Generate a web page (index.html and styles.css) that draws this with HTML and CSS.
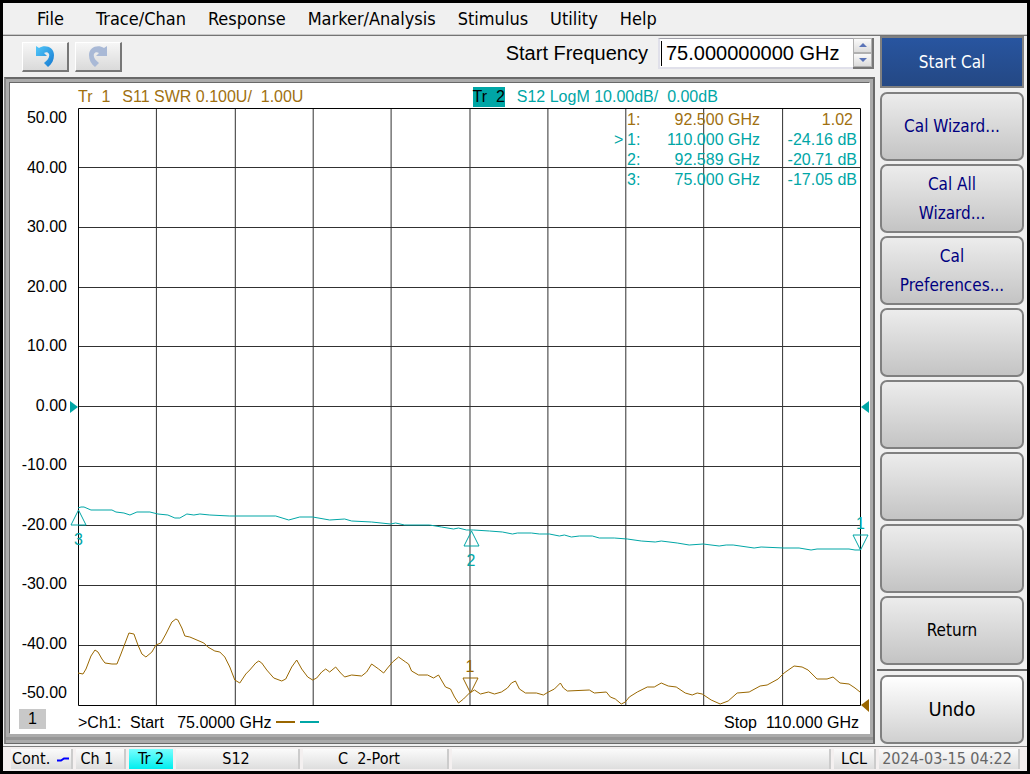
FILE: index.html
```html
<!DOCTYPE html>
<html lang="en">
<head>
<meta charset="utf-8">
<title>Network Analyzer</title>
<link rel="stylesheet" href="styles.css">
</head>
<body>
<div class="app">
  <nav class="menu">
    <button class="menu-item menu-first">File</button>
    <button class="menu-item">Trace/Chan</button>
    <button class="menu-item">Response</button>
    <button class="menu-item">Marker/Analysis</button>
    <button class="menu-item">Stimulus</button>
    <button class="menu-item">Utility</button>
    <button class="menu-item">Help</button>
  </nav>
  <div class="body">
    <main class="work">
      <div class="toolbar">
        <button class="tool" aria-label="Undo">
          <svg width="20" height="22" viewBox="0 0 20 22"><defs><linearGradient id="blue" x2="1" y2="1"><stop offset="0" stop-color="#52c8fa"/><stop offset="1" stop-color="#1478d0"/></linearGradient></defs><path fill="url(#blue)" d="M1 1 4 3C10-1 19 2 19 10c0 5-2 9-6 12l-4-4c4-3 6-6 5-9-1-2-3-2-5-1l3 3H1z"/></svg>
        </button>
        <button class="tool" aria-label="Redo">
          <svg width="20" height="22" viewBox="0 0 20 22"><path fill="#a9b9d6" d="M19 1 16 3C10-1 1 2 1 10c0 5 2 9 6 12l4-4c-4-3-6-6-5-9 1-2 3-2 5-1l-3 3h11z"/></svg>
        </button>
        <label class="freq-label" for="freq">Start Frequency</label>
        <div class="freq-box">
          <input class="freq" id="freq" type="text" value="75.000000000 GHz">
          <div class="spin">
            <button class="spin-btn" aria-label="Increase"><svg width="8" height="4" viewBox="0 0 8 4"><path fill="#5b74b8" d="M0 4 4 0l4 4z"/></svg></button>
            <button class="spin-btn" aria-label="Decrease"><svg width="8" height="4" viewBox="0 0 8 4"><path fill="#5b74b8" d="M0 0 4 4l4-4z"/></svg></button>
          </div>
        </div>
      </div>
      <section class="frame">
        <div class="chart">
          <div class="titles">
            <div class="title brown"><span class="tr">Tr&nbsp; 1</span><span>S11 SWR 0.100U/&nbsp; 1.00U</span></div>
            <div class="title teal"><span class="tr active">Tr&nbsp; 2</span><span>S12 LogM 10.00dB/&nbsp; 0.00dB</span></div>
          </div>
          <div class="axis">
            <span class="tick">50.00</span><span class="tick">40.00</span><span class="tick">30.00</span><span class="tick">20.00</span><span class="tick">10.00</span><span class="tick">0.00</span><span class="tick">-10.00</span><span class="tick">-20.00</span><span class="tick">-30.00</span><span class="tick">-40.00</span><span class="tick">-50.00</span>
          </div>
          <div class="plot">
            <svg class="lines" viewBox="78 108 784 598" preserveAspectRatio="none">
              <path class="grid" d="M156.500 108V706M235.500 108V706M313.500 108V706M391.500 108V706M470.500 108V706M548.500 108V706M626.500 108V706M704.500 108V706M783.500 108V706M78 167.500H862M78 227.500H862M78 287.500H862M78 346.500H862M78 406.500H862M78 466.500H862M78 525.500H862M78 585.500H862M78 645.500H862"/>
              <path class="edge" d="M78.500 108.500H861.500V705.500H78.500z"/>
              <polyline class="trace trace-brown" points="78,673 83,674 86,669 91,656 95,650 98,652 102,659 105,663 112,664 117,664 121,654 129,633 134,634 138,645 142,654 146,657 152,652 156,645 161,643 166,634 172,622 176,619 178,620 182,628 185,636 190,637 204,643 208,647 215,651 220,652 225,657 230,667 235,680 240,683 246,674 250,670 256,663 259,661 262,663 267,670 274,678 282,681 286,679 292,667 297,660 302,669 308,677 313,680 317,678 322,672 326,669 330,672 336,667 341,673 345,677 352,675 362,676 367,672 372,664 379,669 384,673 388,668 393,662 399,657 406,662 409,664 412,671 419,675 428,675 434,678 439,675 443,682 446,687 451,689 455,697 459,703 464,699 470,693 475,690 481,694 489,692 495,694 502,692 508,688 512,683 516,681 520,689 526,693 537,693 544,695 549,692 555,689 561,683 564,688 568,691 590,690 595,693 607,692 611,697 616,699 622,704 626,702 630,697 638,692 648,687 655,687 662,683 669,686 677,687 686,693 693,695 698,693 703,694 712,700 721,704 729,701 738,693 750,692 761,686 768,685 779,679 785,673 795,666 803,667 809,670 818,679 828,679 834,677 841,683 850,684 856,688 861,692"/>
              <polyline class="trace trace-teal" points="78,508 81,507 84,507 91,510 112,510 116,512 124,513 130,515 137,512 150,512 158,514 168,515 175,518 180,518 187,514 194,515 200,514 210,515 230,516 276,516 289,520 300,517 313,517 330,520 345,519 352,521 372,522 391,524 396,523 405,525 430,525 442,527 454,529 459,528 467,530 474,530 490,531 503,532 513,534 518,533 532,533 540,534 550,534 560,536 565,535 572,537 580,536 593,536 600,538 615,538 628,539 642,541 656,542 662,541 678,543 690,545 704,544 720,546 727,545 734,545 755,548 762,547 785,548 800,548 812,550 818,549 850,549 856,550 861,550"/>
            </svg>
            <svg class="ref ref-left" width="8" height="12" viewBox="0 0 8 12"><path fill="#00a6a6" d="M0 0 8 6 0 12z"/></svg>
            <svg class="ref ref-right" width="8" height="12" viewBox="0 0 8 12"><path fill="#00a6a6" d="M8 0 0 6l8 6z"/></svg>
            <svg class="ref ref-brown" width="8" height="13" viewBox="0 0 8 13"><path fill="#996600" d="M8 0 0 6l8 7z"/></svg>
            <div class="marker up m3"><svg width="17" height="17" viewBox="0 0 17 17"><path d="M8.500 1 16 16H1z"/></svg><span>3</span></div>
            <div class="marker up m2"><svg width="17" height="17" viewBox="0 0 17 17"><path d="M8.500 1 16 16H1z"/></svg><span>2</span></div>
            <div class="marker down m1"><span>1</span><svg width="17" height="17" viewBox="0 0 17 17"><path d="M8.500 16 16 1H1z"/></svg></div>
            <div class="marker down mb"><span>1</span><svg width="17" height="17" viewBox="0 0 17 17"><path d="M8.500 16 16 1H1z"/></svg></div>
            <table class="readout">
              <tr class="brown"><td class="cur"></td><td class="num">1:</td><td class="hz">92.500 GHz</td><td class="val unitless">1.02</td></tr>
              <tr><td class="cur">&gt;</td><td class="num">1:</td><td class="hz">110.000 GHz</td><td class="val">-24.16 dB</td></tr>
              <tr><td class="cur"></td><td class="num">2:</td><td class="hz">92.589 GHz</td><td class="val">-20.71 dB</td></tr>
              <tr><td class="cur"></td><td class="num">3:</td><td class="hz">75.000 GHz</td><td class="val">-17.05 dB</td></tr>
            </table>
          </div>
          <div class="chan"><span class="chan-no">1</span></div>
          <div class="sweep">
            <span>&gt;Ch1:&nbsp; Start&nbsp;&nbsp; 75.0000 GHz</span>
            <i class="key key-brown"></i><i class="key key-teal"></i>
            <span class="stop">Stop&nbsp; 110.000 GHz</span>
          </div>
        </div>
      </section>
    </main>
    <aside class="side">
      <div class="head">Start Cal</div>
      <button class="soft">Cal Wizard...</button>
      <button class="soft">Cal All<br>Wizard...</button>
      <button class="soft">Cal<br>Preferences...</button>
      <button class="soft" aria-label="Unused"></button>
      <button class="soft" aria-label="Unused"></button>
      <button class="soft" aria-label="Unused"></button>
      <button class="soft" aria-label="Unused"></button>
      <button class="soft plain">Return</button>
      <div class="undo-wrap"><button class="soft undo">Undo</button></div>
    </aside>
  </div>
  <footer class="status">
    <span class="cell cont">Cont.<svg width="13" height="6" viewBox="0 0 13 6"><path d="M1 4.500h4l3-2h5" stroke="#0000ff" stroke-width="2" fill="none"/></svg></span>
    <span class="cell ch">Ch 1</span>
    <span class="cell trc">Tr 2</span>
    <span class="cell param">S12</span>
    <span class="cell port">C&nbsp; 2-Port</span>
    <span class="cell msg"></span>
    <span class="cell lcl">LCL</span>
    <span class="cell date">2024-03-15 04:22</span>
  </footer>
</div>
</body>
</html>
```
FILE: styles.css
```css
* { box-sizing: border-box; }
body { margin: 0; background: #000; }
button { margin: 0; padding: 0; color: inherit; font: inherit; }
.app {
  display: flex;
  flex-direction: column;
  min-height: 100vh;
  border: 3px solid #000;
  background: #f0f0f0;
  color: #000;
  font: 17px/20px "DejaVu Sans Condensed", "DejaVu Sans", sans-serif;
}
.menu {
  display: flex;
  gap: 22px;
  height: 33px;
  padding-left: 34px;
  border-bottom: 2px ridge #c8c8c8;
  background: #f0f0f0;
  font-size: 18px;
}
.menu-item { border: 0; background: none; white-space: nowrap; }
.menu-first { margin-right: 10px; }
.body { display: flex; flex: 1; }
.work { display: flex; flex: 1; flex-direction: column; min-width: 0; }

.toolbar { display: flex; align-items: center; height: 41px; padding: 0 2px 0 19px; }
.tool {
  display: flex;
  align-items: center;
  justify-content: center;
  width: 47px;
  height: 30px;
  margin: 0 6px 0 0;
  border: 1px solid #fff;
  border-right: 2px solid #777;
  border-bottom: 2px solid #777;
  background: linear-gradient(#f6f6f6, #dadada);
}
.freq-label { margin: 0 10px 8px auto; font: 20px/24px "Liberation Sans", Arial, sans-serif; }
.freq-box { display: flex; height: 31px; margin-bottom: 6px; }
.freq {
  width: 195px;
  padding: 0 6px;
  border: 2px solid #e0e0ea;
  border-top: 1px solid #a0a0a8;
  border-right: 0;
  background: linear-gradient(#000, #000) 1px center / 1px 25px no-repeat #fff;
  color: #000;
  font: 20px/24px "Liberation Sans", Arial, sans-serif;
  outline: none;
}
.spin {
  display: flex;
  flex-direction: column;
  width: 21px;
  border-right: 2px solid #777;
  border-bottom: 2px solid #777;
  background: #fff;
}
.spin-btn {
  display: flex;
  flex: 1;
  align-items: center;
  justify-content: center;
  border: 1px solid #b0b0b0;
  background: linear-gradient(#fafafa, #dcdcdc);
}

.frame {
  display: flex;
  flex: 1;
  margin: 0 1px 2px 1px;
  padding: 4px 3px 9px 4px;
  border: 2px solid #696969;
  border-left-color: #888;
  border-bottom-width: 1px;
  background: linear-gradient(#969696, #969696) 0 calc(100% - 3px) / 100% 3px no-repeat #ababab;
}
.chart {
  display: grid;
  flex: 1;
  grid-template: 25px 1fr 28px / 68px 1fr 9px;
  background: #fff;
  box-shadow: -1px -1px 0 #696969;
  font: 16px/20px "Liberation Sans", Arial, sans-serif;
}
.titles { display: grid; grid-column: 2 / 3; grid-template-columns: 1fr 1fr; align-items: center; padding-top: 2px; }
.title { display: flex; gap: 12px; white-space: nowrap; }
.title.teal { padding-left: 3px; }
.brown { color: #a07010; }
.teal { color: #00a6a6; }
.active { background: #00a6a6; color: #000; }
.axis { display: flex; grid-column: 1; flex-direction: column; padding-right: 11px; }
.tick { display: flex; flex: 2; align-items: center; justify-content: flex-end; }
.tick:first-child { flex: 1; align-items: flex-start; }
.tick:last-child { flex: 1; align-items: flex-end; padding-bottom: 3px; }
.plot { position: relative; min-width: 0; }
.lines { position: absolute; width: 100%; height: 100%; }
.grid { fill: none; stroke: #303030; shape-rendering: crispEdges; }
.edge { fill: none; stroke: #000; shape-rendering: crispEdges; }
.trace { fill: none; shape-rendering: crispEdges; }
.trace-brown { stroke: #996600; }
.trace-teal { stroke: #00a6a6; }
.ref { position: absolute; top: calc(50% - 6px); }
.ref-left { right: 100%; }
.ref-right { left: 100%; }
.ref-brown { top: calc(100% - 7px); left: 100%; }
.marker {
  position: absolute;
  display: flex;
  flex-direction: column;
  align-items: center;
  width: 17px;
  margin-left: -8px;
  color: #00a6a6;
}
.marker svg { fill: none; stroke: currentColor; }
.up { gap: 4px; }
.down { line-height: 16px; gap: 2px; }
.m3 { top: 67%; left: 0; }
.m2 { top: 70.5%; left: 50%; margin-left: -7px; }
.m1 { bottom: 26%; left: 100%; margin-left: -9px; }
.mb { bottom: 2%; left: 50%; color: #996600; }
.readout {
  position: absolute;
  top: 2px;
  right: 0;
  border-collapse: collapse;
  color: #00a6a6;
  white-space: nowrap;
}
.readout .brown { color: #a07010; }
.readout td { height: 20px; padding: 0; }
.readout .cur { width: 13px; }
.readout .num { width: 18px; }
.readout .hz { width: 115px; text-align: right; }
.readout .val { width: 101px; padding-right: 4px; text-align: right; }
.readout .unitless { padding-right: 8px; }
.chan { grid-column: 1; padding: 3px 0 0 9px; }
.chan-no { display: block; width: 27px; background: #c8c8c8; text-align: center; }
.sweep { display: flex; align-items: center; padding-top: 6px; white-space: nowrap; }
.key { width: 19px; height: 2px; margin: 0 0 2px 5px; }
.key-brown { background: #996600; }
.key-teal { background: #00a6a6; }
.stop { margin-left: auto; padding-right: 2px; }

.side {
  display: flex;
  flex-direction: column;
  gap: 3px;
  width: 151px;
  padding: 0 3px 0 4px;
  color: #000080;
  line-height: 29px;
}
.head {
  height: 52px;
  margin-bottom: 1px;
  border: 2px solid #808080;
  background: linear-gradient(#2855a0, #244884);
  color: #fff;
  line-height: 48px;
  text-align: center;
}
.soft {
  height: 69px;
  border: 2px solid #808080;
  border-radius: 7px;
  background: linear-gradient(#ececec, #c4c4c4);
}
.plain { color: #000; }
.undo-wrap {
  display: flex;
  margin: 1px -3px 0 -3px;
  padding: 4px 3px 0 3px;
  border-top: 2px solid #696969;
}
.undo { flex: 1; background: linear-gradient(#fff, #d0d0d0); color: #000; font-size: 20px; }

.status {
  display: flex;
  gap: 3px;
  height: 25px;
  padding: 2px 7px 2px 8px;
  border-top: 1px solid #808080;
  background: #f4f0f0;
  font-size: 16px;
}
.cell {
  border-right: 2px solid #ccc;
  background: linear-gradient(#fbfbfb, #dedede);
  text-align: center;
  white-space: nowrap;
}
.cont { display: flex; align-items: center; justify-content: space-between; width: 62px; padding: 0 2px 0 1px; }
.ch { width: 50px; padding-right: 6px; }
.trc { width: 44px; border-right: 0; background: linear-gradient(#7ff, #0ee); }
.param { width: 124px; padding-right: 2px; }
.port { width: 146px; padding-right: 12px; }
.msg { flex: 1; }
.lcl { width: 42px; }
.date { width: 141px; padding-right: 3px; color: #666; }
```
